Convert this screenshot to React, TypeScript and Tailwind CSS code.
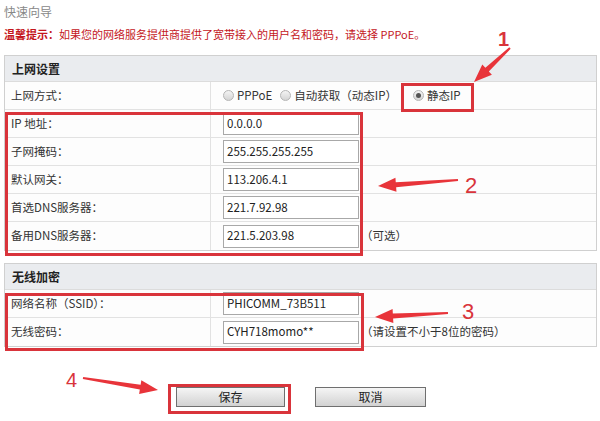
import React from "react";

const font = { fontFamily: '"Noto Sans CJK SC", "Noto Sans", "Liberation Sans", sans-serif' };

function Radio({ checked }: { checked?: boolean }) {
  return (
    <span className="inline-flex w-[11px] h-[11px] rounded-full border border-[#b5b5b5] bg-gradient-to-b from-[#f4f4f4] to-[#d4d4d4] items-center justify-center mr-[3px]">
      {checked && <span className="w-[5px] h-[5px] rounded-full bg-[#555]" />}
    </span>
  );
}

function Input({ value }: { value: string }) {
  return (
    <div className="w-[136px] h-[23px] border border-[#a8a8a8] bg-white flex items-center pl-[3px] text-[11.5px] text-[#222]">
      {value}
    </div>
  );
}

function Row({ label, children, last }: { label: string; children: React.ReactNode; last?: boolean }) {
  return (
    <div className={`flex h-[28px] ${last ? "" : "border-b border-[#e2e2e2]"}`}>
      <div className="w-[206px] border-r border-[#e2e2e2] flex items-center pl-[6px] text-[11.5px] text-[#333]">{label}</div>
      <div className="flex-1 flex items-center pl-[12px] text-[11.5px] text-[#333]">{children}</div>
    </div>
  );
}

function Header({ title }: { title: string }) {
  return (
    <div className="h-[26px] bg-[#eaecef] border-b border-[#dcdcdc] flex items-center pl-[7px] text-[12px] font-bold text-[#222]">
      {title}
    </div>
  );
}

function Arrow({ x1, y1, x2, y2 }: { x1: number; y1: number; x2: number; y2: number }) {
  const dx = x2 - x1, dy = y2 - y1;
  const len = Math.sqrt(dx * dx + dy * dy);
  const ux = dx / len, uy = dy / len;
  const px = -uy, py = ux;
  const hl = 18, hw = 7;
  const bx = x2 - ux * hl, by = y2 - uy * hl;
  const pts = `${x1 + px * 1},${y1 + py * 1} ${bx + px * 2.5},${by + py * 2.5} ${bx + px * hw},${by + py * hw} ${x2},${y2} ${bx - px * hw},${by - py * hw} ${bx - px * 2.5},${by - py * 2.5} ${x1 - px * 1},${y1 - py * 1}`;
  return <polygon points={pts} fill="#e8343a" />;
}

export default function App() {
  return (
    <div className="relative w-[600px] h-[421px] bg-white overflow-hidden" style={font}>
      <div className="pl-[4px] pt-[3px] text-[12px] text-[#888] h-[22px]">快速向导</div>
      <div className="pl-[4px] mt-[4px] text-[11px] text-[#c4161c] h-[18px]">
        <span className="font-bold">温馨提示：</span>如果您的网络服务提供商提供了宽带接入的用户名和密码，请选择 PPPoE。
      </div>
      <div className="ml-[4px] mt-[11px] w-[593px] border border-[#d0d0d0] bg-[#fdfdfd]">
        <Header title="上网设置" />
        <Row label="上网方式：">
          <span className="inline-flex items-center mr-[8px]"><Radio />PPPoE</span>
          <span className="inline-flex items-center mr-[16px]"><Radio />自动获取（动态IP）</span>
          <span className="inline-flex items-center"><Radio checked />静态IP</span>
        </Row>
        <Row label="IP 地址："><Input value="0.0.0.0" /></Row>
        <Row label="子网掩码："><Input value="255.255.255.255" /></Row>
        <Row label="默认网关："><Input value="113.206.4.1" /></Row>
        <Row label="首选DNS服务器："><Input value="221.7.92.98" /></Row>
        <Row label="备用DNS服务器：" last>
          <Input value="221.5.203.98" />
          <span className="ml-[2px]">（可选）</span>
        </Row>
      </div>
      <div className="ml-[4px] mt-[12px] w-[593px] border border-[#d0d0d0] bg-[#fdfdfd]">
        <Header title="无线加密" />
        <Row label="网络名称（SSID）：">
          <Input value="PHICOMM_73B511" />
        </Row>
        <Row label="无线密码：" last>
          <Input value="CYH718momo**" />
          <span className="ml-[2px]">（请设置不小于8位的密码）</span>
        </Row>
      </div>
      <div className="flex mt-[40px] pl-[176px] gap-[30px]">
        <button className="w-[109px] h-[20px] border border-[#6f6f6f] bg-gradient-to-b from-[#f5f5f5] to-[#d2d2d2] text-[12px] text-[#222] flex items-center justify-center">保存</button>
        <button className="w-[111px] h-[20px] border border-[#6f6f6f] bg-gradient-to-b from-[#f5f5f5] to-[#d2d2d2] text-[12px] text-[#222] flex items-center justify-center">取消</button>
      </div>

      {/* annotations */}
      <div className="absolute left-[401px] top-[83px] w-[73px] h-[29px] border-[3px] border-[#d9343b]" />
      <div className="absolute left-[5px] top-[112px] w-[358px] h-[144px] border-[3px] border-[#d9343b]" />
      <div className="absolute left-[5px] top-[293px] w-[359px] h-[58px] border-[3px] border-[#d9343b]" />
      <div className="absolute left-[168px] top-[384px] w-[123px] h-[30px] border-[3px] border-[#d9343b]" />
      <svg className="absolute left-0 top-0" width="600" height="421">
        <Arrow x1={510} y1={48} x2={474} y2={82} />
        <Arrow x1={458} y1={180} x2={378} y2={186} />
        <Arrow x1={448} y1={313} x2={375} y2={317} />
        <Arrow x1={83} y1={378} x2={158} y2={390} />
      </svg>
      <div className="absolute left-[498px] top-[29px] text-[20px] font-bold text-[#d9343b] leading-none" style={{ fontFamily: '"Liberation Sans", sans-serif' }}>1</div>
      <div className="absolute left-[465px] top-[175px] text-[22px] text-[#d9343b] leading-none" style={{ fontFamily: '"Liberation Sans", sans-serif' }}>2</div>
      <div className="absolute left-[462px] top-[301px] text-[22px] text-[#d9343b] leading-none" style={{ fontFamily: '"Liberation Sans", sans-serif' }}>3</div>
      <div className="absolute left-[66px] top-[370px] text-[20px] text-[#d9343b] leading-none" style={{ fontFamily: '"Liberation Sans", sans-serif' }}>4</div>
    </div>
  );
}
